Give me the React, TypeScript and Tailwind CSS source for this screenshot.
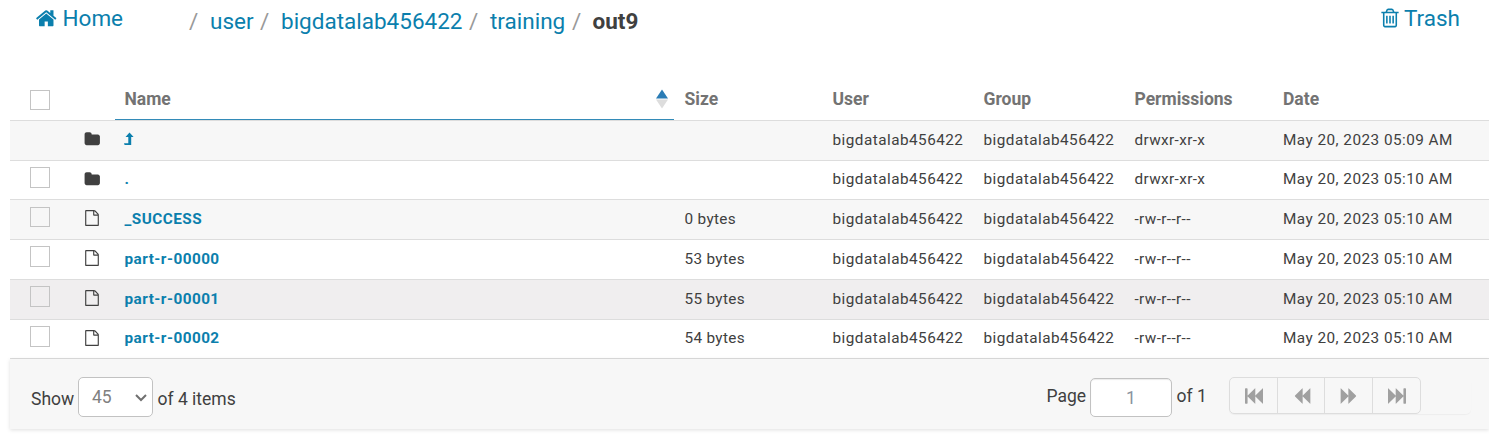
import React from "react";

const PATHS = {
  home: "M1472 992v480q0 26-19 45t-45 19h-384v-384h-256v384h-384q-26 0-45-19t-19-45v-480q0-1 .5-3t.5-3l575-474 575 474q1 2 1 6zm223-69l-62 74q-8 9-21 11h-3q-13 0-21-7l-692-577-692 577q-12 8-24 7-13-2-21-11l-62-74q-8-10-7-23.5t11-21.5l719-599q32-26 76-26t76 26l244 204v-195q0-14 9-23t23-9h192q14 0 23 9t9 23v408l219 182q10 8 11 21.5t-7 23.5z",
  trash: "M704 736v576q0 14-9 23t-23 9h-64q-14 0-23-9t-9-23v-576q0-14 9-23t23-9h64q14 0 23 9t9 23zm256 0v576q0 14-9 23t-23 9h-64q-14 0-23-9t-9-23v-576q0-14 9-23t23-9h64q14 0 23 9t9 23zm256 0v576q0 14-9 23t-23 9h-64q-14 0-23-9t-9-23v-576q0-14 9-23t23-9h64q14 0 23 9t9 23zm128 724v-948h-896v948q0 22 7 40.5t14.5 27 10.5 8.5h832q3 0 10.5-8.5t14.5-27 7-40.5zm-672-1076h448l-48-117q-7-9-17-11h-317q-10 2-17 11zm928 32v64q0 14-9 23t-23 9h-96v948q0 83-47 143.5t-113 60.5h-832q-66 0-113-58.5t-47-141.5v-952h-96q-14 0-23-9t-9-23v-64q0-14 9-23t23-9h309l70-167q15-37 54-63t79-26h320q40 0 79 26t54 63l70 167h309q14 0 23 9t9 23z",
  folder: "M1728 608v704q0 92-66 158t-158 66h-1216q-92 0-158-66t-66-158v-960q0-92 66-158t158-66h320q92 0 158 66t66 158v32h672q92 0 158 66t66 158z",
  file: "M1596 380q28 28 48 76t20 88v1152q0 40-28 68t-68 28h-1344q-40 0-68-28t-28-68v-1600q0-40 28-68t68-28h896q40 0 88 20t76 48zm-444-244v376h376q-10-29-22-41l-313-313q-12-12-41-22zm384 1528v-1024h-416q-40 0-68-28t-28-68v-416h-768v1536h1280z",
  fast: "M1747 141q19-19 32-13t13 32v1472q0 26-13 32t-32-13l-710-710q-9-9-13-19v710q0 26-13 32t-32-13l-710-710q-9-9-13-19v678q0 26-19 45t-45 19h-128q-26 0-45-19t-19-45v-1408q0-26 19-45t45-19h128q26 0 45 19t19 45v678q4-11 13-19l710-710q19-19 32-13t13 32v710q4-11 13-19z",
  back: "M1683 141q19-19 32-13t13 32v1472q0 26-13 32t-32-13l-710-710q-9-9-13-19v710q0 26-13 32t-32-13l-710-710q-19-19-19-45t19-45l710-710q19-19 32-13t13 32v710q4-11 13-19z",
};

function Icon({ name, className }: { name: keyof typeof PATHS; className: string }) {
  return (
    <svg viewBox="0 0 1792 1792" fill="currentColor" className={`block shrink-0 ${className}`}>
      <path d={PATHS[name]} />
    </svg>
  );
}

const COLS = "grid grid-cols-[65px_40px_559px_149px_151px_151px_148px_1fr]";

type Row = { kind: "folder" | "file"; name: string; size: string; perm: string; time: string; cls: string; box: string };

const ROWS: Row[] = [
  { kind: "folder", name: "..", size: "", perm: "drwxr-xr-x", time: "05:09", cls: "h-10 leading-[38px] bg-[#f7f7f7]", box: "" },
  { kind: "folder", name: ".", size: "", perm: "drwxr-xr-x", time: "05:10", cls: "h-[39px] leading-[36px] bg-white", box: "h-[21px] mt-[6px]" },
  { kind: "file", name: "_SUCCESS", size: "0 bytes", perm: "-rw-r--r--", time: "05:10", cls: "h-10 leading-[38px] bg-[#f7f7f7]", box: "h-5 mt-[7px]" },
  { kind: "file", name: "part-r-00000", size: "53 bytes", perm: "-rw-r--r--", time: "05:10", cls: "h-10 leading-[38px] bg-white", box: "h-[21px] mt-[6px]" },
  { kind: "file", name: "part-r-00001", size: "55 bytes", perm: "-rw-r--r--", time: "05:10", cls: "h-10 leading-[38px] bg-[#f0eeef]", box: "h-[21px] mt-[6px]" },
  { kind: "file", name: "part-r-00002", size: "54 bytes", perm: "-rw-r--r--", time: "05:10", cls: "h-[39px] leading-[36px] bg-white", box: "h-[21px] mt-[6px]" },
];

function Crumb({ children }: { children: React.ReactNode }) {
  return <a className="text-[#0b7fad]">{children}</a>;
}

function TopBar() {
  return (
    <header className="flex h-[79px] items-start text-[22.5px] leading-[26px] text-[#0b7fad]">
      <a className="ml-[35px] mt-[5px] flex w-[154px] items-center gap-[5px]">
        <Icon name="home" className="size-[22.5px]" />
        Home
      </a>
      <nav className="mt-[8px] flex items-center text-[#999999]">
        <span className="w-[21px]">/</span>
        <span className="w-[50px]"><Crumb>user</Crumb></span>
        <span className="w-[21px]">/</span>
        <span className="w-[188px]"><Crumb>bigdatalab456422</Crumb></span>
        <span className="w-[21px]">/</span>
        <span className="w-[82px]"><Crumb>training</Crumb></span>
        <span className="w-[20.5px]">/</span>
        <span className="font-bold text-[#404040]">out9</span>
      </nav>
      <a className="ml-auto mr-[29px] mt-[5px] flex items-center gap-[3px]">
        <Icon name="trash" className="size-[22px]" />
        Trash
      </a>
    </header>
  );
}

function TableHead() {
  return (
    <div className={`${COLS} h-[42px] border-b border-[#dddddd] text-[17.5px] font-bold leading-[40px] text-[#737373]`}>
      <span className="ml-5 mt-[11px] size-5 border border-[#c4c4c4] bg-white" />
      <span />
      <span className="flex h-[41px] items-start justify-between border-b border-[#338bb8] pl-[9.5px] pr-[6px]">
        Name
        <svg viewBox="0 0 12 20" className="mt-[10px] h-5 w-3">
          <path d="M6 0.5 L12 9.5 H0Z" fill="#2a7cb5" />
          <path d="M0 10.5 H12 L6 19.5Z" fill="#dddddd" />
        </svg>
      </span>
      <span className="pl-[10.5px]">Size</span>
      {["User", "Group", "Permissions"].map((h) => (
        <span key={h} className="pl-[9.5px]">{h}</span>
      ))}
      <span className="pl-[10px]">Date</span>
    </div>
  );
}

function FileRow({ row }: { row: Row }) {
  return (
    <div className={`${COLS} ${row.cls} border-b border-[#dddddd] text-[15.3px] tracking-[0.47px] text-[#404040]`}>
      {row.box ? <span className={`ml-5 w-5 border border-[#c4c4c4] ${row.box}`} /> : <span />}
      <span className="pl-[9px]">
        {row.kind === "folder" ? (
          <Icon name="folder" className="mt-[9.5px] size-[16.5px]" />
        ) : (
          <Icon name="file" className="mt-[9.5px] size-[16px]" />
        )}
      </span>
      <span className="pl-[9.5px] font-bold text-[#0b7fad]">
        {row.name === ".." ? (
          <svg viewBox="0 0 10 14" className="-ml-[0.5px] mt-[11px] h-[14px] w-[10px]" fill="currentColor">
            <path d="M5.5 0.6 L9.6 5 H7.2 V12.9 H0.6 L0 11.2 H4.3 V5 H1.5Z" />
          </svg>
        ) : row.name}
      </span>
      <span className="pl-[10.5px] tracking-[0.33px]">{row.size}</span>
      <span className="pl-[9.5px]">bigdatalab456422</span>
      <span className="pl-[9.5px]">bigdatalab456422</span>
      <span className="pl-[9.5px] tracking-[0.38px]">{row.perm}</span>
      <span className="whitespace-nowrap pl-[10px]">May 20, 2023 {row.time} AM</span>
    </div>
  );
}

function PagerButton({ name, className = "", flip = false }: { name: "fast" | "back"; className?: string; flip?: boolean }) {
  return (
    <button className={`flex items-center justify-center border-[#dddddd] ${className}`}>
      <Icon name={name} className={flip ? "size-[18px] -scale-x-100" : "size-[18px]"} />
    </button>
  );
}

function Footer() {
  return (
    <footer className="flex h-[70px] items-start bg-[#f7f7f7] pl-[21px] text-[17.5px] leading-[21px] text-[#404040] shadow-[0_1px_4px_rgba(0,0,0,0.13)]">
      <span className="mt-[30px] w-[47px]">Show</span>
      <div className="mt-[18px] flex h-10 w-[75px] items-center justify-between rounded-[5px] border border-[#c2c2c2] bg-white pl-[13px] pr-[5px] text-[#808080]">
        45
        <svg viewBox="0 0 12 8" className="mt-[1px] h-2 w-3" fill="none" stroke="#707070" strokeWidth="2">
          <path d="M1 1 L6 6 L11 1" />
        </svg>
      </div>
      <span className="ml-[4.5px] mt-[30px]">of 4 items</span>
      <div className="ml-auto flex items-start pr-[18px]">
        <span className="mt-[27px] w-[43.5px]">Page</span>
        <div className="mt-[19px] flex h-[39px] w-[82px] items-center justify-center rounded-[5px] border border-[#c2c2c2] bg-white pt-px text-[#8a939e] shadow-[inset_0_1px_1px_rgba(0,0,0,0.08)]">1</div>
        <span className="ml-[4.5px] mt-[27px] w-[52.5px]">of 1</span>
        <div className="mt-[18px] h-[37px] w-[242px] rounded-[5px] shadow-[0_1px_1px_rgba(0,0,0,0.04)]">
          <div className="grid h-[37px] w-[192px] grid-cols-[48px_47px_48px_47px] rounded-[5px] border border-[#dddddd] text-[#a0a0a0]">
            <PagerButton name="fast" className="border-r" />
            <PagerButton name="back" className="border-r pl-[2px]" />
            <PagerButton name="back" flip className="border-r" />
            <PagerButton name="fast" flip />
          </div>
        </div>
      </div>
    </footer>
  );
}

export default function App() {
  return (
    <main className="h-[435px] overflow-hidden bg-white font-['Roboto','Liberation_Sans',sans-serif]">
      <TopBar />
      <section className="ml-[10px]">
        <TableHead />
        {ROWS.map((row) => <FileRow key={row.name} row={row} />)}
        <Footer />
      </section>
    </main>
  );
}
